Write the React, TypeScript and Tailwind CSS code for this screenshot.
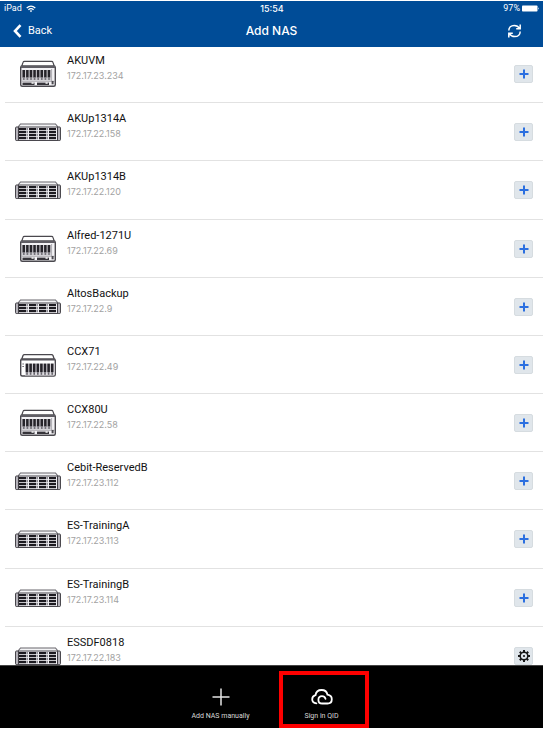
import React from "react";

type Model = "tower" | "rack" | "rackSlim" | "desk";

interface Nas {
  name: string;
  ip: string;
  model: Model;
  configured?: boolean;
}

const devices: Nas[] = [
  { name: "AKUVM", ip: "172.17.23.234", model: "tower" },
  { name: "AKUp1314A", ip: "172.17.22.158", model: "rack" },
  { name: "AKUp1314B", ip: "172.17.22.120", model: "rack" },
  { name: "Alfred-1271U", ip: "172.17.22.69", model: "tower" },
  { name: "AltosBackup", ip: "172.17.22.9", model: "rackSlim" },
  { name: "CCX71", ip: "172.17.22.49", model: "desk" },
  { name: "CCX80U", ip: "172.17.22.58", model: "tower" },
  { name: "Cebit-ReservedB", ip: "172.17.23.112", model: "rack" },
  { name: "ES-TrainingA", ip: "172.17.23.113", model: "rack" },
  { name: "ES-TrainingB", ip: "172.17.23.114", model: "rack" },
  { name: "ESSDF0818", ip: "172.17.22.183", model: "rack", configured: true },
];

const bays = [0, 1, 2, 3, 4, 5, 6, 7];

function TowerIcon() {
  return (
    <svg width="46" height="28" viewBox="0 0 46 28" aria-hidden="true">
      <path d="M6.5 7 L8 2.4 Q8.3 1.4 9.5 1.4 H36.5 Q37.7 1.4 38 2.4 L39.5 7" fill="#fff" stroke="#4a484e" strokeWidth="1.2" />
      <rect x="5.7" y="6" width="34.6" height="20.3" rx="1.5" fill="#f3f2f5" stroke="#4a484e" strokeWidth="1.4" />
      <path d="M6 7 H40" stroke="#5f5d64" strokeWidth="1.8" />
      <rect x="7" y="10" width="29" height="10.5" fill="#cbc9cf" />
      {bays.map((i) => (
        <g key={i}>
          <rect x={7.5 + i * 3.6} y="10" width="2.5" height="7.5" fill="#252329" />
          <rect x={8 + i * 3.6} y="17.5" width="1.6" height="2.5" fill="#77757c" />
        </g>
      ))}
      <path d="M7 21.3 H40 M36.6 9 V21" stroke="#9b99a0" strokeWidth="0.8" />
      <rect x="7.5" y="22.6" width="12" height="2.4" fill="#36343a" />
      <rect x="22" y="22.6" width="12" height="2.4" fill="#36343a" />
      <rect x="16.5" y="22.2" width="2.2" height="1.6" fill="#eee" />
      <rect x="30.5" y="22.2" width="2.2" height="1.6" fill="#eee" />
      <path d="M36.6 21h2v3.3h-2z" fill="#4c4a50" />
    </svg>
  );
}

function DeskIcon() {
  return (
    <svg width="46" height="28" viewBox="0 0 46 28" aria-hidden="true">
      <path d="M6.5 9 L8 4.5 Q8.4 3.6 9.5 3.6 H36.5 Q37.6 3.6 38 4.5 L39.5 9" fill="#fff" stroke="#4a484e" strokeWidth="1.3" />
      <rect x="5.7" y="8" width="34.6" height="17" rx="1.5" fill="#fff" stroke="#4a484e" strokeWidth="1.4" />
      <path d="M6 8.8 H40" stroke="#55535a" strokeWidth="1.6" />
      <path d="M7.3 13h1.7 M7.3 15.5h1.7" stroke="#77757c" strokeWidth="1.2" />
      <rect x="10" y="12.5" width="29.5" height="12" fill="#dddbe0" />
      {bays.map((i) => (
        <g key={i}>
          <rect x={10.7 + i * 3.6} y="12.6" width="2.6" height="8.6" fill="#252329" />
          <rect x={11.2 + i * 3.6} y="21.2" width="1.6" height="2.6" fill="#66646b" />
        </g>
      ))}
    </svg>
  );
}

function RackIcon({ rows }: { rows: number }) {
  const top = rows === 4 ? 9 : 10;
  const pitch = 3;
  const height = rows * pitch + 1.5;
  return (
    <svg width="46" height="28" viewBox="0 0 46 28" aria-hidden="true">
      <path d={`M3 ${top} L5.5 ${top - 3} H40.5 L43 ${top}`} fill="#f4f4f6" stroke="#68666d" strokeWidth="1.1" />
      <rect x="3.5" y={top} width="39" height={height} fill="#f0eff3" stroke="#4a484e" strokeWidth="1" />
      <rect x="0.6" y={top} width="2.8" height={height} rx="0.8" fill="#c3c1c8" stroke="#38363c" strokeWidth="1" />
      <rect x="42.6" y={top} width="2.8" height={height} rx="0.8" fill="#c3c1c8" stroke="#38363c" strokeWidth="1" />
      {bays.slice(0, rows).map((r) =>
        bays.slice(0, 4).map((c) => (
          <g key={`${r}-${c}`}>
            <rect x={4 + c * 10} y={top + 1 + r * pitch} width="7" height="2.2" fill="#1d1b21" />
            <rect x={11.4 + c * 10} y={top + 1 + r * pitch} width="1.6" height="2.2" fill={c < 3 ? "#8d8b92" : "none"} />
          </g>
        ))
      )}
    </svg>
  );
}

function DeviceIcon({ model }: { model: Model }) {
  if (model === "tower") return <TowerIcon />;
  if (model === "desk") return <DeskIcon />;
  return <RackIcon rows={model === "rack" ? 4 : 3} />;
}

function GearIcon() {
  return (
    <svg width="14" height="14" viewBox="0 0 14 14" fill="none" stroke="#171717" aria-hidden="true">
      <circle cx="7" cy="7" r="3.8" strokeWidth="1.5" />
      <circle cx="7" cy="7" r="1.1" fill="#171717" stroke="none" />
      <path
        d="M7 1V3 M7 11v2 M1 7h2 M11 7h2 M2.8 2.8l1.4 1.4 M9.8 9.8l1.4 1.4 M2.8 11.2l1.4-1.4 M9.8 4.2l1.4-1.4"
        strokeWidth="2"
      />
    </svg>
  );
}

function PlusIcon() {
  return (
    <svg width="10" height="10" viewBox="0 0 10 10" aria-hidden="true">
      <path d="M5 0.5v9 M0.5 5h9" stroke="#2b6fe0" strokeWidth="2" />
    </svg>
  );
}

function DeviceRow({ device }: { device: Nas }) {
  return (
    <li className="ml-[5px] flex border-b border-[#e2e2e2] px-[10px]">
      <div className="w-[52px] shrink-0 pt-[15px]">
        <DeviceIcon model={device.model} />
      </div>
      <div className="min-w-0 flex-1 pt-2">
        <p className="font-['Roboto','Liberation_Sans',sans-serif] text-[11px] leading-[15px] text-[#111]">
          {device.name}
        </p>
        <p className="text-[9px] leading-[15px] text-[#a2a2a2]">{device.ip}</p>
      </div>
      <button
        type="button"
        aria-label={`${device.configured ? "Settings for" : "Add"} ${device.name}`}
        className="mt-5 flex h-[18px] w-[19px] items-center justify-center rounded-[2px] border border-[#d6dce0] bg-[#e0e6eb]"
      >
        {device.configured ? <GearIcon /> : <PlusIcon />}
      </button>
    </li>
  );
}

export default function App() {
  return (
    <div className="bg-white pt-px font-['Inter','Liberation_Sans',sans-serif]">
      <header className="relative z-10 bg-[#004c97] text-white">
        <div className="grid h-[15px] grid-cols-3 items-center pl-1 pr-[3px] text-[9px] leading-[15px]">
          <span className="flex items-center gap-1 font-['Roboto','Liberation_Sans',sans-serif]">
            iPad
            <svg width="10" height="8" viewBox="0 0 10 8" fill="none" stroke="white" aria-hidden="true">
              <path d="M0.7 3 Q5 -0.8 9.3 3 M2.4 4.8 Q5 2.6 7.6 4.8" strokeWidth="1.3" />
              <path d="M3.7 5.8 Q5 4.8 6.3 5.8 L5 7.3z" fill="white" stroke="none" />
            </svg>
          </span>
          <span className="text-center font-medium">15:54</span>
          <span className="flex items-center justify-end gap-[2px] font-['Roboto','Liberation_Sans',sans-serif]">
            97%
            <svg width="18" height="7" viewBox="0 0 18 7" aria-hidden="true">
              <rect x="0" y="0.5" width="15.5" height="6" rx="0.8" fill="white" />
              <path d="M16.3 2.2 Q17.8 3.5 16.3 4.8z" fill="white" />
            </svg>
          </span>
        </div>
        <div className="grid h-[31px] grid-cols-3 items-center pb-[2px] pl-[13px] pr-[21px]">
          <button
            type="button"
            className="flex items-center gap-[6px] font-['Roboto','Liberation_Sans',sans-serif] text-[11px] leading-4"
          >
            <svg width="9" height="14" viewBox="0 0 9 14" fill="none" aria-hidden="true">
              <path d="M7.5 1.2 L2 7 L7.5 12.8" stroke="white" strokeWidth="2.6" />
            </svg>
            Back
          </button>
          <h1 className="pl-2 text-center text-[12px] font-medium leading-4">Add NAS</h1>
          <button type="button" aria-label="Refresh" className="justify-self-end">
            <svg width="15" height="14" viewBox="0 0 15 14" fill="none" stroke="white" strokeWidth="1.5" aria-hidden="true">
              <path d="M1.8 6.6 C1.8 3.6 4 1.4 7.2 1.4 C9.6 1.4 11.4 2.4 12.6 4.4 M13.2 0.6 V4.7 H9.2" />
              <path d="M13.2 7.4 C13.2 10.4 11 12.6 7.8 12.6 C5.4 12.6 3.6 11.6 2.4 9.6 M1.8 13.4 V9.3 H5.8" />
            </svg>
          </button>
        </div>
      </header>

      <main className="-mt-[2px] h-[620px] overflow-hidden">
        <ul className="grid h-[640px] auto-rows-fr">
          {devices.map((device) => (
            <DeviceRow key={device.name} device={device} />
          ))}
        </ul>
      </main>

      <footer className="relative flex h-[63px] justify-center border-t border-[#444] bg-black pr-1 font-['Roboto','Liberation_Sans',sans-serif] text-[#d8d8d8]">
        <button type="button" className="mt-[5px] flex h-[57px] w-[100px] flex-col items-center pt-[17px]">
          <svg width="18" height="18" viewBox="0 0 18 18" aria-hidden="true">
            <path d="M9 0.5v17 M0.5 9h17" stroke="#e5e5e5" strokeWidth="1.5" />
          </svg>
          <span className="mt-[3px] text-[7px] leading-[14px]">Add NAS manually</span>
        </button>
        <button
          type="button"
          className="ml-2 mt-[5px] flex h-[57px] w-[90px] flex-col items-center border-4 border-[#fe0000] pr-1 pt-[13px]"
        >
          <svg width="22" height="18" viewBox="0 0 22 18" fill="none" stroke="white" strokeWidth="1.8" strokeLinecap="round" aria-hidden="true">
            <path d="M5.4 15.3 C2.8 15.2 1.2 13.4 1.2 11.3 C1.2 9.2 2.5 7.7 4.5 7.2 C5 4 7.6 2 10.6 2 C13.7 2 15.9 3.9 16.5 6.7 C19 7.1 20.8 8.8 20.8 11.2 C20.8 13.7 19 15.5 16.5 15.5 H11.3 C9 15.5 7.4 13.9 7.4 11.9 C7.4 9.7 9 8.2 11 8.2 C12.8 8.2 14 9.2 14.5 10.8" />
          </svg>
          <span className="mt-[3px] text-[7px] leading-[14px]">Sign in QID</span>
        </button>
      </footer>
    </div>
  );
}
